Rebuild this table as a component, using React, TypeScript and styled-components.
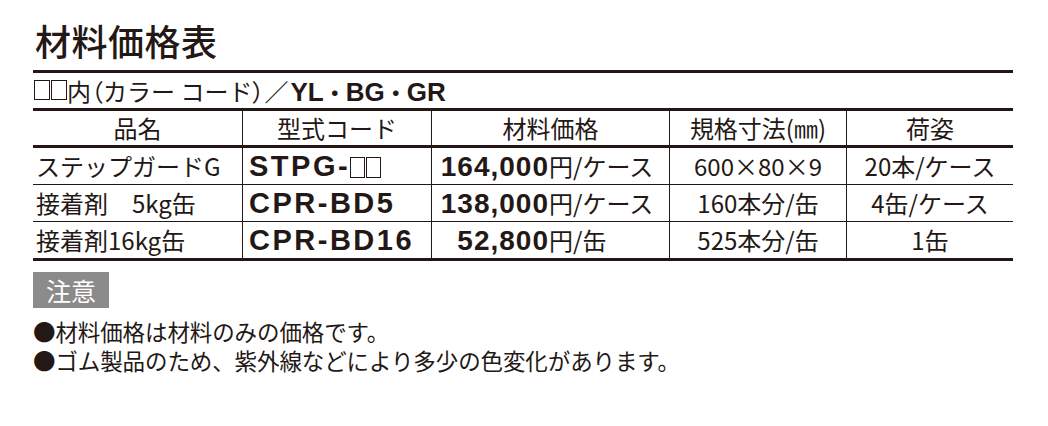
import React from "react";
import styled, { createGlobalStyle } from "styled-components";

const INK = "#231815";
const JP = `"Noto Sans CJK JP", "Noto Sans", sans-serif`;
const LATIN_BOLD = `"Liberation Sans", "Noto Sans CJK JP", sans-serif`;
const COLUMNS = "209px 189px 238px 177px 167px";

const GlobalStyle = createGlobalStyle`
  html, body {
    margin: 0;
    padding: 0;
    background: #ffffff;
  }
  body {
    font-family: ${JP};
    color: ${INK};
  }
`;

const Page = styled.div`
  width: 980px;
  padding: 22px 0 0 33px;
`;

const Title = styled.h1`
  margin: 0 0 12px 0;
  padding-left: 2px;
  font-size: 36px;
  line-height: 36px;
  font-weight: 500;
  letter-spacing: 0.5px;
`;

const Table = styled.div`
  border-top: 3px solid ${INK};
`;

const Subtitle = styled.div`
  height: 35px;
  line-height: 35px;
  padding-left: 1px;
  border-bottom: 3px solid ${INK};
  font-size: 24px;
  white-space: nowrap;
`;

const Paren = styled.span`
  font-feature-settings: "palt";
`;

const SubtitleCodes = styled.span`
  font-family: ${LATIN_BOLD};
  font-weight: 700;
  font-size: 26px;
  margin-left: 2px;
`;

const Dot = styled.span`
  font-family: ${JP};
  font-weight: 700;
  font-size: 22px;
`;

/* empty placeholder squares for the colour code */
const Blank = styled.span<{ $w: number; $h: number; $drop: number }>`
  display: inline-block;
  box-sizing: border-box;
  width: ${({ $w }) => $w}px;
  height: ${({ $h }) => $h}px;
  border: 1px solid ${INK};
  vertical-align: ${({ $drop }) => -$drop}px;
  & + & {
    margin-left: 1px;
  }
`;

const Row = styled.div<{ $height: number; $border: number }>`
  display: grid;
  grid-template-columns: ${COLUMNS};
  height: ${({ $height }) => $height}px;
  line-height: ${({ $height }) => $height}px;
  border-bottom: ${({ $border }) => $border}px solid ${INK};
`;

const Cell = styled.div<{ $align?: "left" | "center"; $pad?: number }>`
  box-sizing: border-box;
  height: 100%;
  text-align: ${({ $align }) => $align || "center"};
  padding-left: ${({ $pad }) => $pad || 0}px;
  font-size: 24px;
  white-space: nowrap;
  overflow: hidden;

  & + & {
    border-left: 1px solid ${INK};
  }
`;

const Code = styled.span`
  font-family: ${LATIN_BOLD};
  font-weight: 700;
  font-size: 29px;
  letter-spacing: 2.5px;
`;

const Price = styled.span`
  display: inline-block;
  width: 109px;
  text-align: right;
  font-family: ${LATIN_BOLD};
  font-weight: 700;
  font-size: 28px;
  letter-spacing: 1px;
`;

const Unit = styled.span`
  font-size: 24px;
`;

const Notice = styled.div`
  display: inline-block;
  margin-top: 11px;
  padding: 0 13px;
  background: #8b8b8b;
  color: #ffffff;
  font-size: 25px;
  line-height: 36px;
`;

const NoteList = styled.ul`
  list-style: none;
  margin: 9px 0 0 0;
  padding: 0;
  font-size: 22.5px;
  line-height: 29px;
  letter-spacing: -0.1px;
`;

const Note = styled.li`
  white-space: nowrap;
`;

type Item = {
  name: string;
  code: string;
  blank?: boolean;
  price: string;
  unit: string;
  size: string;
  pack: string;
};

const items: Item[] = [
  {
    name: "ステップガードG",
    code: "STPG-",
    blank: true,
    price: "164,000",
    unit: "円/ケース",
    size: "600×80×9",
    pack: "20本/ケース",
  },
  {
    name: "接着剤　5kg缶",
    code: "CPR-BD5",
    price: "138,000",
    unit: "円/ケース",
    size: "160本分/缶",
    pack: "4缶/ケース",
  },
  {
    name: "接着剤16kg缶",
    code: "CPR-BD16",
    price: "52,800",
    unit: "円/缶",
    size: "525本分/缶",
    pack: "1缶",
  },
];

export default function App() {
  return (
    <>
      <GlobalStyle />
      <Page>
        <Title>材料価格表</Title>

        <Table>
          <Subtitle>
            <Blank $w={16} $h={20} $drop={-1} />
            <Blank $w={16} $h={20} $drop={-1} />
            内<Paren>（</Paren>カラー コード<Paren>）</Paren>／
            <SubtitleCodes>
              YL<Dot>・</Dot>BG<Dot>・</Dot>GR
            </SubtitleCodes>
          </Subtitle>

          <Row $height={34} $border={3}>
            <Cell>品名</Cell>
            <Cell>型式コード</Cell>
            <Cell>材料価格</Cell>
            <Cell>規格寸法(㎜)</Cell>
            <Cell>荷姿</Cell>
          </Row>

          {items.map((item, i) => (
            <Row
              key={item.code}
              $height={36}
              $border={i === items.length - 1 ? 3 : 1}
            >
              <Cell $align="left" $pad={3}>
                {item.name}
              </Cell>
              <Cell $align="left" $pad={6}>
                <Code>{item.code}</Code>
                {item.blank && (
                  <>
                    <Blank $w={15} $h={21} $drop={2} />
                    <Blank $w={15} $h={21} $drop={2} />
                  </>
                )}
              </Cell>
              <Cell $align="left" $pad={8}>
                <Price>{item.price}</Price>
                <Unit>{item.unit}</Unit>
              </Cell>
              <Cell>{item.size}</Cell>
              <Cell>{item.pack}</Cell>
            </Row>
          ))}
        </Table>

        <Notice>注意</Notice>
        <NoteList>
          <Note>●材料価格は材料のみの価格です。</Note>
          <Note>●ゴム製品のため、紫外線などにより多少の色変化があります。</Note>
        </NoteList>
      </Page>
    </>
  );
}
